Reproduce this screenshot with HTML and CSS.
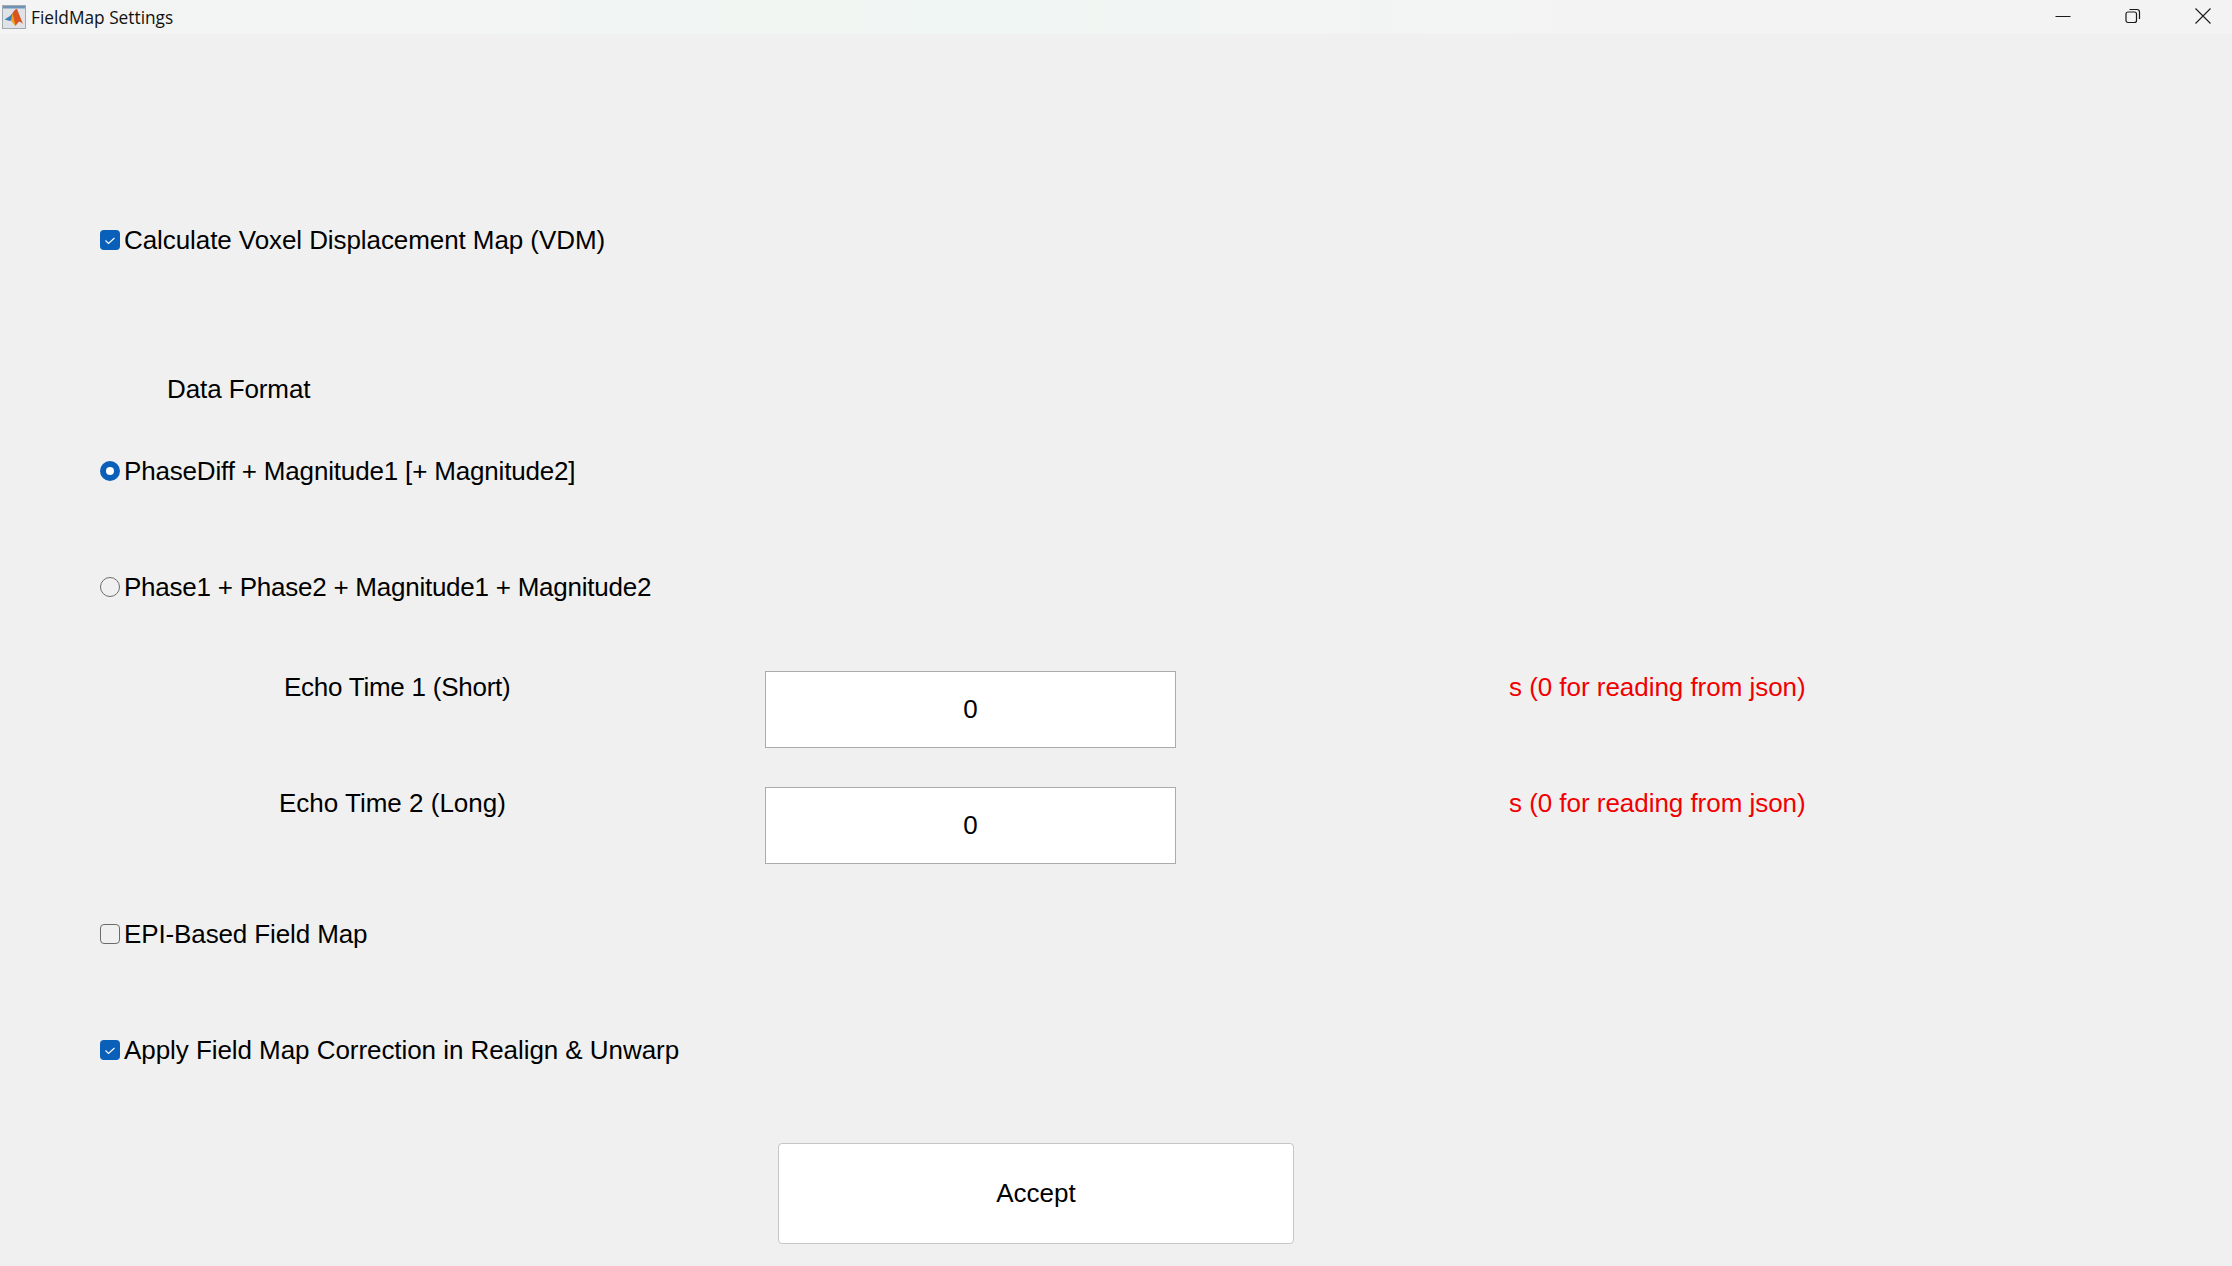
FILE: index.html
```html
<!DOCTYPE html>
<html lang="en">
<head>
<meta charset="utf-8">
<title>FieldMap Settings</title>
<link rel="stylesheet" href="styles.css">
</head>
<body>
<div class="window">
  <header class="titlebar">
    <svg class="app-icon" width="24" height="24" viewBox="0 0 24 24">
      <rect x="0.5" y="0.5" width="23" height="23" fill="#dfe3e8" stroke="#a4a9ae"/>
      <rect x="1" y="1" width="22" height="2.5" fill="#6d93b8"/>
      <path d="M2.5 14.5 L8 11 L10.5 8 L12 13 L8 16 Z" fill="#3d7fb5"/>
      <path d="M10.5 8 C12.5 5 14 3.5 15 4 L21 19 C19 17.5 18 16.5 16.5 17 L13.5 21 C12 17 11.5 14 10.5 8 Z" fill="#d9531e"/>
      <path d="M10.5 8 L13.5 21 L9 16 Z" fill="#f3a31f"/>
    </svg>
    <span class="title">FieldMap Settings</span>
    <div class="controls">
      <svg class="ctl" width="16" height="16" viewBox="0 0 16 16"><path d="M0.5 8.5 H15.5" stroke="#1a1a1a" fill="none"/></svg>
      <svg class="ctl" width="16" height="16" viewBox="0 0 16 16"><rect x="1" y="4" width="10.5" height="10.5" rx="2" fill="none" stroke="#1a1a1a" stroke-width="1.2"/><path d="M4.5 1.5 H12 A2.5 2.5 0 0 1 14.5 4 V11" fill="none" stroke="#1a1a1a" stroke-width="1.2"/></svg>
      <svg class="ctl" width="16" height="16" viewBox="0 0 16 16"><path d="M0.5 0.5 L15.5 15.5 M15.5 0.5 L0.5 15.5" stroke="#1a1a1a" stroke-width="1.1" fill="none"/></svg>
    </div>
  </header>
  <main class="form">
    <label class="option row-vdm"><input class="box checked" type="checkbox" checked><span>Calculate Voxel Displacement Map (VDM)</span></label>
    <div class="heading">Data Format</div>
    <label class="option row-phasediff"><input class="radio" type="radio" name="fmt" checked><span>PhaseDiff + Magnitude1 [+ Magnitude2]</span></label>
    <label class="option row-phase"><input class="radio" type="radio" name="fmt"><span>Phase1 + Phase2 + Magnitude1 + Magnitude2</span></label>
    <div class="echo echo-first">
      <span class="echo-label label-short">Echo Time 1 (Short)</span>
      <input class="field" type="text" value="0">
      <span class="note">s (0 for reading from json)</span>
    </div>
    <div class="echo echo-second">
      <span class="echo-label label-long">Echo Time 2 (Long)</span>
      <input class="field" type="text" value="0">
      <span class="note">s (0 for reading from json)</span>
    </div>
    <label class="option row-epi"><input class="box" type="checkbox"><span>EPI-Based Field Map</span></label>
    <label class="option row-apply"><input class="box" type="checkbox" checked><span>Apply Field Map Correction in Realign &amp; Unwarp</span></label>
    <div class="actions"><button class="accept" type="button">Accept</button></div>
  </main>
</div>
</body>
</html>
```
FILE: styles.css
```css
* { box-sizing: border-box; }
html, body { margin: 0; height: 100%; }
body {
  background: #f0f0f0;
  color: #000;
  font-family: "Liberation Sans", Arial, sans-serif;
  font-size: 26px;
  overflow: hidden;
}
.window { display: flex; flex-direction: column; height: 1266px; overflow: hidden; }
.titlebar {
  display: flex;
  align-items: center;
  height: 34px;
  flex: none;
  padding-left: 2px;
  background: linear-gradient(90deg, #f3f4f3 0%, #f0f6f3 45%, #f3f3f3 70%, #f3f3f3 100%);
}
.app-icon { flex: none; margin-top: -1px; }
.title {
  margin-left: 5px;
  font-family: "Open Sans", "Noto Sans", sans-serif;
  font-size: 17.3px;
  color: #111;
}
.controls { display: flex; margin-left: auto; margin-right: 21px; gap: 54px; margin-top: -2px; }
.form { display: flex; flex-direction: column; padding-left: 100px; }
.option { display: flex; align-items: center; height: 40px; gap: 4px; white-space: nowrap; }
.option span { display: block; }
input.box, input.radio {
  appearance: none;
  flex: none;
  width: 20px;
  height: 20px;
  margin: 0;
  background: #f0f0f0;
  border: 1.5px solid #6c6c6c;
}
input.box { border-radius: 4px; }
input.radio { border-radius: 50%; }
input.box:checked {
  border: 0;
  background: #0a60b8 url("data:image/svg+xml,%3Csvg xmlns='http://www.w3.org/2000/svg' width='20' height='20'%3E%3Cpath d='M5.5 10.5 L8.5 13.5 L14.5 8' fill='none' stroke='white' stroke-width='1.1'/%3E%3C/svg%3E") center no-repeat;
}
input.radio:checked { border: 6px solid #0a60b8; background: #fff; }
.row-vdm { margin-top: 186px; letter-spacing: -0.08px; }
.heading { margin-top: 109px; padding-left: 67px; height: 40px; line-height: 40px; letter-spacing: -0.1px; }
.row-phasediff { margin-top: 42px; letter-spacing: -0.17px; }
.row-phase { margin-top: 76px; letter-spacing: -0.24px; }
.echo { display: flex; align-items: flex-start; height: 77px; }
.echo-first { margin-top: 64px; }
.echo-second { margin-top: 39px; }
.echo-label { line-height: 33px; white-space: nowrap; }
.label-short { margin-left: 184px; width: 481px; letter-spacing: -0.25px; }
.label-long { margin-left: 179px; width: 486px; }
.field {
  width: 411px;
  height: 77px;
  padding: 0;
  border: 1px solid #ababab;
  background: #fff;
  text-align: center;
  font: inherit;
  color: #000;
}
.note { margin-left: 333px; line-height: 33px; color: #f00000; white-space: nowrap; letter-spacing: -0.04px; }
.row-epi { margin-top: 50px; letter-spacing: -0.12px; }
.row-apply { margin-top: 76px; letter-spacing: -0.06px; }
.actions { margin-top: 73px; padding-left: 678px; }
.accept {
  display: block;
  width: 516px;
  height: 101px;
  padding: 0;
  background: #fff;
  border: 1px solid #c6c6c6;
  border-radius: 4px;
  font: inherit;
  color: #000;
}
```
